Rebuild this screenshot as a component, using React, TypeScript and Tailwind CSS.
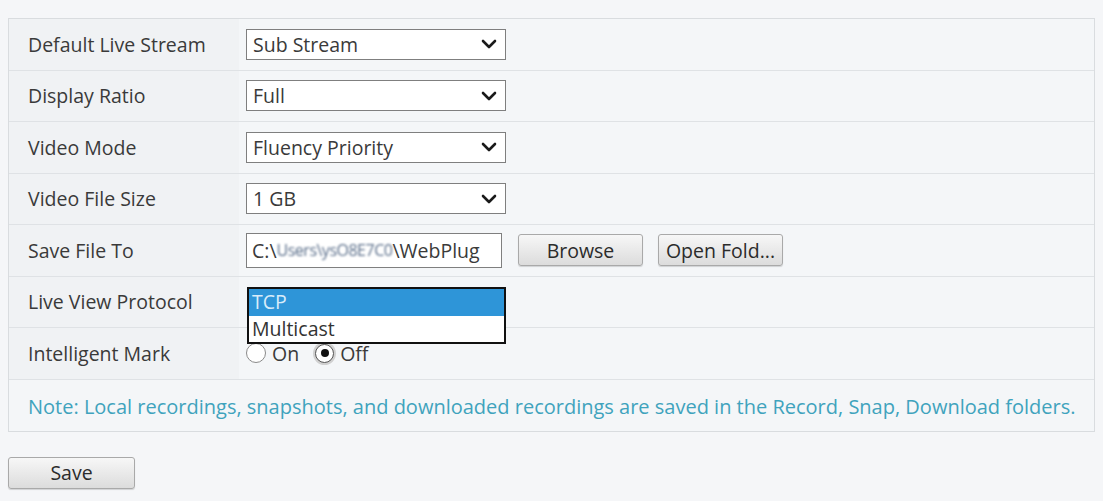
import React from "react";

const Chevron = () => (
  <svg width="16" height="10" viewBox="0 0 16 10" className="shrink-0">
    <polyline points="2,2 8,8 14,2" fill="none" stroke="#1a1a1a" strokeWidth="2.6" strokeLinecap="round" strokeLinejoin="round" />
  </svg>
);

const Select = ({ value }: { value: string }) => (
  <div className="flex h-[31px] w-[260px] items-center justify-between border border-[#7f7f7f] bg-white pl-[6px] pr-[8px]">
    <span className="leading-none">{value}</span>
    <Chevron />
  </div>
);

const Btn = ({ label, w }: { label: string; w: string }) => (
  <div
    className={`flex h-[32px] ${w} items-center justify-center rounded-[3px] border border-[#a9a9a9] bg-gradient-to-b from-[#f7f7f7] to-[#dcdcdc] text-[#2b2b2b] shadow-[0_1px_1px_rgba(0,0,0,0.15)]`}
  >
    {label}
  </div>
);

const Row = ({ label, children, last }: { label: string; children?: React.ReactNode; last?: boolean }) => (
  <div className={`flex h-[51.5px] ${last ? "" : "border-b border-[#dfe2e5]"}`}>
    <div className="flex w-[230px] items-center bg-[#f0f2f4] pl-[19px]">{label}</div>
    <div className="relative flex flex-1 items-center bg-[#f4f6f8] pl-[7px]">{children}</div>
  </div>
);

export default function App() {
  return (
    <div className="min-h-[501px] w-[1103px] bg-[#f5f6f8] px-2 pt-[18px] font-['Open_Sans',sans-serif] text-[19.5px] text-[#3a3a3a]">
      <div className="w-[1087px] border border-[#d9dcdf]">
        <Row label="Default Live Stream">
          <Select value="Sub Stream" />
        </Row>
        <Row label="Display Ratio">
          <Select value="Full" />
        </Row>
        <Row label="Video Mode">
          <Select value="Fluency Priority" />
        </Row>
        <Row label="Video File Size">
          <Select value="1 GB" />
        </Row>
        <Row label="Save File To">
          <div className="flex h-[35px] w-[256px] items-center overflow-hidden whitespace-nowrap border border-[#7f7f7f] bg-white pl-[5px]">
            <span>C:\</span>
            <span className="blur-[1.2px] text-[16px] tracking-[-0.5px] text-[#5a6e8a]">Users\ysO8E7C0</span>
            <span>\WebPlug</span>
          </div>
          <div className="ml-[16px]">
            <Btn label="Browse" w="w-[125px]" />
          </div>
          <div className="ml-[15px]">
            <Btn label="Open Fold..." w="w-[125px]" />
          </div>
        </Row>
        <Row label="Live View Protocol">
          <div className="absolute left-[8px] top-[10px] z-10 w-[259px] border-2 border-[#111] bg-white leading-none">
            <div className="flex h-[27px] items-center bg-[#2e95d8] pl-[3px] text-[#d8ecfa]">TCP</div>
            <div className="flex h-[26px] items-center pl-[3px] text-[#333]">Multicast</div>
          </div>
        </Row>
        <Row label="Intelligent Mark">
          <div className="flex items-center">
            <span className="h-[20px] w-[20px] rounded-full border border-[#8a8a8a] bg-white" />
            <span className="ml-[6px]">On</span>
            <span className="ml-[16px] flex h-[19px] w-[19px] items-center justify-center rounded-full border border-[#555] bg-white shadow-[0_0_0_2px_#d0d0d0]">
              <span className="h-[8px] w-[8px] rounded-full bg-[#111]" />
            </span>
            <span className="ml-[6px]">Off</span>
          </div>
        </Row>
        <div className="flex h-[51.5px] items-center bg-[#f4f6f8] pl-[19px] pt-[4px] text-[20px] text-[#3fa3bd]">
          Note: Local recordings, snapshots, and downloaded recordings are saved in the Record, Snap, Download folders.
        </div>
      </div>
      <div className="mt-[25px]">
        <Btn label="Save" w="w-[127px]" />
      </div>
    </div>
  );
}
